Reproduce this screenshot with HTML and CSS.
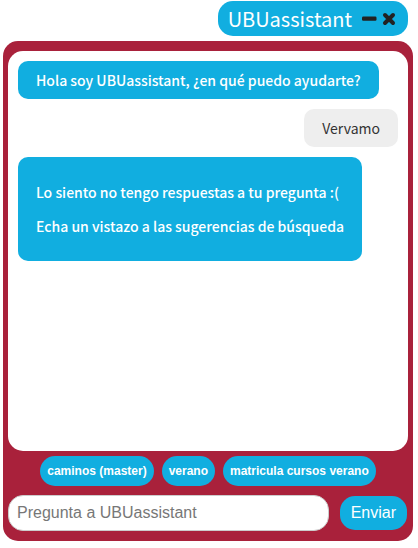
FILE: index.html
```html
<!DOCTYPE html>
<html lang="es">
<head>
<meta charset="utf-8">
<meta name="viewport" content="width=device-width, initial-scale=1">
<title>UBUassistant</title>
<link rel="stylesheet" href="styles.css">
</head>
<body>
<header class="titlebar">
  <h1 class="title">UBUassistant</h1>
  <button class="control" type="button" aria-label="Minimizar">
    <svg width="15" height="16" viewBox="0 0 15 16"><rect x="0" y="5.500" width="14.500" height="4.200" rx="1.200"/></svg>
  </button>
  <button class="control" type="button" aria-label="Cerrar">
    <svg width="14" height="16" viewBox="0 0 14 16"><path d="M3 4 11 12M11 4 3 12"/></svg>
  </button>
</header>
<main class="panel">
  <section class="messages">
    <div class="message bot">Hola soy UBUassistant, ¿en qué puedo ayudarte?</div>
    <div class="message user">Vervamo</div>
    <div class="message bot answer">
      <p>Lo siento no tengo respuestas a tu pregunta :(</p>
      <p>Echa un vistazo a las sugerencias de búsqueda</p>
    </div>
  </section>
  <div class="suggestions">
    <button class="chip" type="button">caminos (master)</button>
    <button class="chip" type="button">verano</button>
    <button class="chip" type="button">matricula cursos verano</button>
  </div>
  <form class="composer">
    <input class="question" type="text" aria-label="Pregunta" placeholder="Pregunta a UBUassistant">
    <button class="send" type="button">Enviar</button>
  </form>
</main>
</body>
</html>
```
FILE: styles.css
```css
* {
  box-sizing: border-box;
}

body {
  display: flex;
  flex-direction: column;
  gap: 5px;
  min-height: 100vh;
  margin: 0;
  padding: 1px 5px 7px 3px;
  background: #fff;
  font-family: "Noto Sans CJK SC", "Noto Sans", sans-serif;
  font-size: 14px;
}

button {
  border: 0;
  background: #11aee0;
  color: #fff;
  font-family: "Liberation Sans", Arial, sans-serif;
}

.titlebar {
  display: flex;
  align-items: center;
  align-self: flex-end;
  height: 35px;
  margin-right: 5px;
  padding: 0 12px 0 10px;
  border-radius: 15px;
  background: #11aee0;
  color: #fff;
}

.title {
  margin: 0 10px 0 0;
  font-size: 20px;
  font-weight: 400;
  line-height: 32px;
}

.control {
  display: flex;
  padding: 0;
}

.control + .control {
  margin-left: 5px;
}

.control svg {
  fill: #222;
  stroke: #222;
  stroke-width: 4;
  stroke-linecap: round;
}

.control rect {
  stroke: none;
}

.panel {
  display: flex;
  flex: 1;
  flex-direction: column;
  padding: 10px 5px;
  border-radius: 15px;
  background: #a9213b;
}

.messages {
  display: flex;
  flex: 1;
  flex-direction: column;
  align-items: flex-start;
  gap: 10px;
  padding: 10px;
  border-radius: 15px;
  background: #fff;
}

.message {
  padding: 7px 18px;
  border-radius: 10px;
  line-height: 24px;
}

.bot {
  background: #11aee0;
  color: #fff;
  font-weight: 500;
}

.user {
  align-self: flex-end;
  background: #eee;
  color: #333;
}

.answer {
  padding-top: 23px;
  padding-bottom: 23px;
}

.answer p {
  margin: 0;
}

.answer p + p {
  margin-top: 10px;
}

.suggestions {
  display: flex;
  flex-wrap: wrap;
  justify-content: center;
  gap: 8px;
  padding: 5px 0 9px;
}

.chip {
  height: 30px;
  padding: 0 7px;
  border-radius: 15px;
  font-size: 12px;
  font-weight: 700;
}

.composer {
  display: flex;
  align-items: center;
  gap: 11px;
  padding-right: 1px;
}

.question {
  flex: 1;
  min-width: 0;
  height: 36px;
  padding: 0 8px;
  border: 1px solid #ccc;
  border-radius: 15px;
  background: #fff;
  color: #333;
  font-family: "Liberation Sans", Arial, sans-serif;
  font-size: 16px;
}

.question::placeholder {
  color: #777;
}

.send {
  height: 34px;
  padding: 0 11px;
  border-radius: 15px;
  font-size: 16px;
}
```
